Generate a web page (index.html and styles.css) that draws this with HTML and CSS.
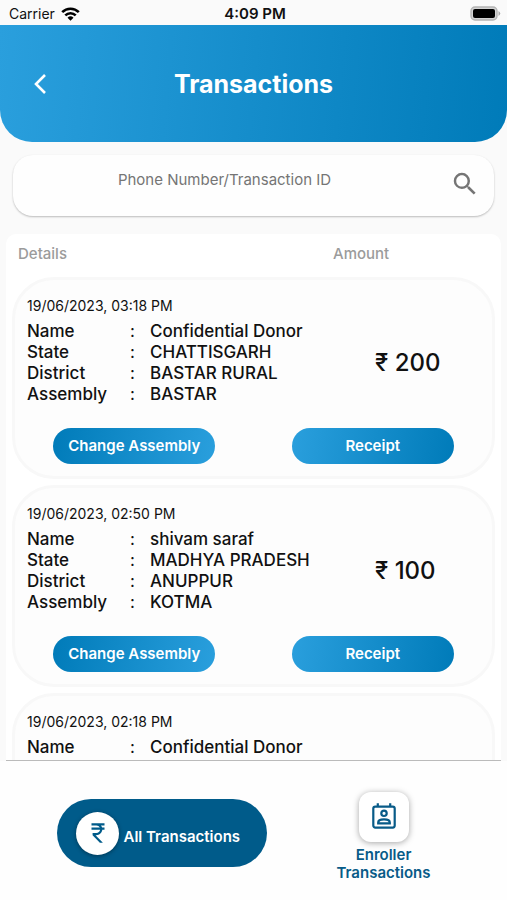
FILE: index.html
```html
<!DOCTYPE html>
<html lang="en">
<head>
    <meta charset="UTF-8">
    <meta name="viewport" content="width=device-width, initial-scale=1.0">
    <title>Transactions</title>
    <link rel="stylesheet" href="styles.css">
</head>
<body>
    <div class="app">
        <div class="status">
            <div class="carrier">
                <span>Carrier</span>
                <svg width="19" height="14" viewBox="0 0 19 14" fill="none" stroke="#000" stroke-width="2.6">
                    <path d="M1.2 5.2 A11.8 11.8 0 0 1 17.8 5.2"/>
                    <path d="M4.3 8.4 A7.4 7.4 0 0 1 14.7 8.4"/>
                    <path d="M9.5 13.8 L6.5 10.8 A4.3 4.3 0 0 1 12.5 10.8 Z" fill="#000" stroke="none"/>
                </svg>
            </div>
            <div class="time">4:09 PM</div>
            <div class="battery">
                <svg width="31" height="15" viewBox="0 0 31 15">
                    <rect x="1" y="1" width="26" height="13" rx="4" fill="#d4d4d4" stroke="#b4b4b4" stroke-width="1.4"/>
                    <rect x="3" y="3" width="22" height="9" rx="2" fill="#000"/>
                    <path d="M28.5 5 Q32 7.500 28.500 10 Z" fill="#a9a9a9"/>
                </svg>
            </div>
        </div>

        <header class="header">
            <button class="back" aria-label="Back">
                <svg width="14" height="22" viewBox="0 0 14 22" fill="none" stroke="#fff" stroke-width="2.6">
                    <path d="M12 2 L3 11 L12 20"/>
                </svg>
            </button>
            <h1>Transactions</h1>
        </header>

        <form class="search">
            <input type="text" class="search-input" placeholder="Phone Number/Transaction ID" aria-label="Phone Number/Transaction ID">
            <button type="button" class="search-btn" aria-label="Search">
                <svg width="30" height="30" viewBox="0 0 24 24" fill="#757575">
                    <path d="M15.500 14h-.79l-.28-.27A6.470 6.470 0 0 0 16 9.500 6.500 6.500 0 1 0 9.500 16c1.610 0 3.090-.59 4.230-1.570l.27.28v.79l5 4.990L20.490 19l-4.990-5zm-6 0C7.010 14 5 11.990 5 9.500S7.010 5 9.500 5 14 7.010 14 9.500 11.990 14 9.500 14z"/>
                </svg>
            </button>
        </form>

        <main class="panel">
            <div class="panel-head">
                <span>Details</span>
                <span>Amount</span>
            </div>
            <div class="list">
                <section class="card">
                    <p class="date">19/06/2023, 03:18 PM</p>
                    <div class="info">
                        <table class="details">
                            <tr><th>Name</th><td class="colon">:</td><td>Confidential Donor</td></tr>
                            <tr><th>State</th><td class="colon">:</td><td>CHATTISGARH</td></tr>
                            <tr><th>District</th><td class="colon">:</td><td>BASTAR RURAL</td></tr>
                            <tr><th>Assembly</th><td class="colon">:</td><td>BASTAR</td></tr>
                        </table>
                        <p class="amount">₹ 200</p>
                    </div>
                    <div class="actions">
                        <button class="btn change">Change Assembly</button>
                        <button class="btn receipt">Receipt</button>
                    </div>
                </section>

                <section class="card">
                    <p class="date">19/06/2023, 02:50 PM</p>
                    <div class="info">
                        <table class="details">
                            <tr><th>Name</th><td class="colon">:</td><td>shivam saraf</td></tr>
                            <tr><th>State</th><td class="colon">:</td><td>MADHYA PRADESH</td></tr>
                            <tr><th>District</th><td class="colon">:</td><td>ANUPPUR</td></tr>
                            <tr><th>Assembly</th><td class="colon">:</td><td>KOTMA</td></tr>
                        </table>
                        <p class="amount">₹ 100</p>
                    </div>
                    <div class="actions">
                        <button class="btn change">Change Assembly</button>
                        <button class="btn receipt">Receipt</button>
                    </div>
                </section>

                <section class="card">
                    <p class="date">19/06/2023, 02:18 PM</p>
                    <div class="info">
                        <table class="details">
                            <tr><th>Name</th><td class="colon">:</td><td>Confidential Donor</td></tr>
                        </table>
                    </div>
                </section>
            </div>
        </main>

        <nav class="tabs">
            <button class="tab-all">
                <span class="circle">
                    <svg width="26" height="26" viewBox="0 0 24 24" fill="#005b8a">
                        <path d="M13.660 7C13.100 5.820 11.900 5 10.500 5H6V3h12v2h-3.260c.48.58.84 1.260 1.050 2H18v2h-2.020c-.25 2.800-2.610 5-5.480 5h-.73l6.730 7h-2.770L7 14v-2h3.500c1.760 0 3.220-1.300 3.460-3H6V7h7.660z"/>
                    </svg>
                </span>
                <span class="label">All Transactions</span>
            </button>
            <button class="tab-enroller">
                <span class="tile">
                    <svg width="28" height="28" viewBox="0 0 28 28" fill="none" stroke="#085b88" stroke-width="2.2">
                        <rect x="3.300" y="3.600" width="21.400" height="21" rx="2"/>
                        <path d="M7.800 .2 V4 M20.200 .2 V4"/>
                        <circle cx="14" cy="10.300" r="2.700"/>
                        <path d="M8.200 20.400 V19.500 C8.200 17.200 11.500 16.400 14 16.400 S19.800 17.200 19.800 19.500 V20.400 Z"/>
                    </svg>
                </span>
                <span>Enroller<br>Transactions</span>
            </button>
        </nav>
    </div>
</body>
</html>
```
FILE: styles.css
```css
*
{
    box-sizing: border-box;
}
html,body
{
    padding: 0;
    margin: 0;
}
body
{
    font-family: Inter, "Liberation Sans", sans-serif;
    background-color: #fafafa;
    color: #111;
}
button
{
    border: none;
    padding: 0;
    background: none;
    font-family: inherit;
    cursor: pointer;
}
h1,p
{
    margin: 0;
}
svg
{
    display: block;
}

.app
{
    height: 100vh;
    display: flex;
    flex-direction: column;
}

.status
{
    flex: none;
    height: 25px;
    padding: 2px 6px 0 9px;
    display: grid;
    grid-template-columns: 1fr auto 1fr;
    align-items: center;
    font-size: 14px;
}
.carrier
{
    display: flex;
    align-items: center;
    gap: 6px;
}
.time
{
    font-size: 15px;
    font-weight: 600;
}
.battery
{
    justify-self: end;
}

.header
{
    flex: none;
    height: 117px;
    padding: 0 33px;
    display: grid;
    grid-template-columns: 1fr auto 1fr;
    align-items: center;
    border-radius: 0 0 32px 32px;
    background: linear-gradient(95deg, #2a9fdd, #007bb9);
    color: white;
}
.header h1
{
    font-size: 25px;
    font-weight: 700;
}
.back
{
    justify-self: start;
}

.search
{
    flex: none;
    display: flex;
    height: 61px;
    margin: 13px 13px 0;
    border-radius: 20px;
    background-color: #fefefe;
    box-shadow: 0 1px 2px rgba(0, 0, 0, 0.25);
}
.search-input
{
    flex: 1;
    min-width: 0;
    padding: 0 0 12px;
    border: none;
    outline: none;
    background: none;
    font-family: inherit;
    font-size: 15px;
    text-align: center;
}
.search-input::placeholder
{
    color: #757575;
    opacity: 1;
}
.search-btn
{
    width: 58px;
    padding-bottom: 4px;
    display: flex;
    justify-content: center;
    align-items: center;
}

.panel
{
    flex: 1;
    min-height: 0;
    display: flex;
    flex-direction: column;
    margin: 18px 6px 0;
    border-radius: 10px 10px 0 0;
    border-bottom: 1px solid #bbb;
    background-color: white;
}
.panel-head
{
    display: grid;
    grid-template-columns: 15fr 8fr;
    padding: 9px 0 12px 12px;
    font-size: 15px;
    font-weight: 500;
    line-height: 22px;
    color: #9b9b9b;
}
.list
{
    flex: 1;
    min-height: 0;
    overflow: hidden;
    display: flex;
    flex-direction: column;
    gap: 6px;
    padding: 0 6px;
}

.card
{
    flex: none;
    height: 202px;
    padding: 16px 0 0;
    border: 3px solid #f8f8f8;
    border-radius: 42px;
    background-color: #fdfdfd;
}
.date
{
    padding-left: 12px;
    font-size: 14px;
    line-height: 20px;
}
.info
{
    display: flex;
    align-items: center;
    padding: 5px 0 0 12px;
}
.details
{
    width: 348px;
    border-collapse: collapse;
    font-size: 17px;
    font-weight: 500;
    line-height: 21px;
}
.details th,
.details td
{
    padding: 0;
    text-align: left;
    font-weight: 500;
    white-space: nowrap;
}
.details th
{
    width: 103px;
}
.details .colon
{
    width: 20px;
    font-weight: 400;
}
.amount
{
    font-size: 24px;
    font-weight: 500;
    line-height: 20px;
    white-space: nowrap;
}
.actions
{
    display: grid;
    grid-template-columns: 1fr 1fr;
    justify-items: center;
    margin-top: 23px;
}
.btn
{
    width: 162px;
    height: 36px;
    padding-bottom: 2px;
    border-radius: 18px;
    font-size: 15px;
    font-weight: 600;
    color: white;
}
.change
{
    background: linear-gradient(100deg, #007bb9, #2a9fdd);
}
.receipt
{
    background: linear-gradient(100deg, #2a9fdd, #007bb9);
}

.tabs
{
    flex: none;
    height: 139px;
    padding: 31px 19px 0 0;
    display: flex;
    justify-content: center;
    align-items: flex-start;
    gap: 69px;
    background-color: #fefefe;
}
.tab-all
{
    display: flex;
    align-items: center;
    gap: 4px;
    width: 210px;
    height: 68px;
    margin-top: 7px;
    padding-left: 19px;
    border-radius: 34px;
    background-color: #005b8a;
    font-size: 15px;
    font-weight: 600;
    color: white;
}
.label
{
    padding-top: 6px;
}
.circle
{
    flex: none;
    display: flex;
    justify-content: center;
    align-items: center;
    width: 43px;
    height: 43px;
    border-radius: 50%;
    background-color: white;
    box-shadow: 0 1px 4px rgba(0, 0, 0, 0.4);
}
.tab-enroller
{
    display: flex;
    flex-direction: column;
    align-items: center;
    gap: 4px;
    font-size: 15px;
    font-weight: 600;
    line-height: 18px;
    color: #085b88;
}
.tile
{
    display: flex;
    justify-content: center;
    align-items: center;
    width: 50px;
    height: 50px;
    border-radius: 12px;
    background-color: white;
    box-shadow: 0 1px 6px rgba(0, 0, 0, 0.35);
}
```
